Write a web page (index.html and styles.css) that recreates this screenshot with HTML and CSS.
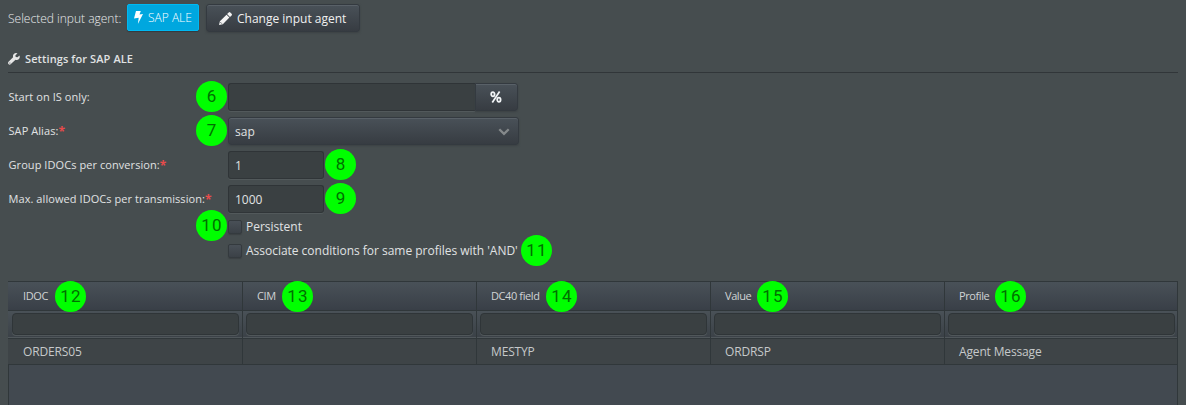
FILE: index.html
```html
<!DOCTYPE html>
<html lang="en">
<head>
<meta charset="utf-8">
<title>Settings for SAP ALE</title>
<link rel="stylesheet" href="styles.css">
</head>
<body>
<header class="toolbar">
  <span class="caption">Selected input agent:</span>
  <span class="agent"><svg width="9" height="13" viewBox="0 0 9 13"><path d="M2 0h4.800L5.500 3.500 9 3 3.900 13 4.700 6.800 0 7.400z" fill="#fff"/></svg><span>SAP ALE</span></span>
  <button class="button change"><svg width="13" height="13" viewBox="0 0 13 13"><path d="M0 13 .9 9.300 7.500 2.700l2.900 2.900-6.600 6.600zM8.100 2.100 9.700.5q.8-.8 1.600 0l1.300 1.300q.8.8 0 1.600L11 5z" fill="#f3f3f3"/><path d="m1.300 10.100 1.600 1.600" stroke="#434a4e" stroke-width=".8"/></svg><span>Change input agent</span></button>
</header>
<h2 class="heading"><svg width="12" height="12" viewBox="0 0 12 12"><path d="M11.500 2.600 9.500 4.300 7.700 3.900 7.400 2.200 9.500.4Q7.500-.4 5.800 1 4.600 2.200 5.100 4.200L.5 8.800Q-.4 10 .6 11.200q1.200.9 2.300-.1L7.500 6.700q2.100.6 3.500-.7 1.200-1.500.5-3.400z" fill="#e6e6e6"/><circle cx="1.900" cy="10" r=".6" fill="#464d4f"/></svg><span>Settings for SAP ALE</span></h2>
<main class="form">
  <div class="row"><label class="label">Start on IS only:</label><i class="marker left">6</i><div class="field wide joined"></div><button class="button percent"><svg width="12" height="12" viewBox="0 0 12 12" fill="none" stroke="#f2f5f7"><ellipse cx="2.900" cy="3.300" rx="1.700" ry="2.100" stroke-width="1.800"/><ellipse cx="8.900" cy="8.700" rx="1.700" ry="2.100" stroke-width="1.800"/><path d="M9.600 .5 2.300 11.500" stroke-width="1.700"/></svg></button></div>
  <div class="row"><label class="label">SAP Alias:<b>*</b></label><i class="marker left">7</i><div class="select"><span>sap</span><svg width="12" height="8" viewBox="0 0 12 8"><path d="m1.300 1.200 4.700 4.700 4.700-4.700" fill="none" stroke="#85898b" stroke-width="2.300"/></svg></div></div>
  <div class="row"><label class="label">Group IDOCs per conversion:<b>*</b></label><div class="field">1</div><i class="marker right">8</i></div>
  <div class="row"><label class="label">Max. allowed IDOCs per transmission:<b>*</b></label><div class="field">1000</div><i class="marker right">9</i></div>
  <div class="check first"><i class="marker left two">10</i><span class="box"></span><span>Persistent</span></div>
  <div class="check"><span class="box"></span><span class="long">Associate conditions for same profiles with 'AND'</span><i class="marker two m11">11</i></div>
</main>
<section class="grid">
  <div class="cells head">
    <div><span>IDOC</span><i class="marker two m12">12</i></div>
    <div><span>CIM</span><i class="marker two m13">13</i></div>
    <div><span>DC40 field</span><i class="marker two m14">14</i></div>
    <div><span>Value</span><i class="marker two m15">15</i></div>
    <div><span>Profile</span><i class="marker two m16">16</i></div>
  </div>
  <div class="cells filter">
    <div><span class="filter-box"></span></div><div><span class="filter-box"></span></div><div><span class="filter-box"></span></div><div><span class="filter-box"></span></div><div><span class="filter-box"></span></div>
  </div>
  <div class="cells data">
    <div>ORDERS05</div><div></div><div>MESTYP</div><div>ORDRSP</div><div>Agent Message</div>
  </div>
</section>
</body>
</html>
```
FILE: styles.css
```css
* { box-sizing: border-box; }
body {
  margin: 0;
  height: 405px;
  overflow: hidden;
  background: #464d4f;
  color: #e0e2e3;
  font: 12px/16px "Open Sans", sans-serif;
  display: flex;
  flex-direction: column;
}
svg { display: block; flex: none; }
span { white-space: nowrap; }
.toolbar { display: flex; height: 36px; padding: 4px 8px 0; flex: none; }
.caption { width: 119px; padding-top: 7px; font-weight: 300; color: #e8eaeb; }
.agent {
  display: flex;
  align-items: center;
  width: 72px;
  height: 27px;
  padding-left: 6px;
  gap: 5px;
  color: #fff;
  font-weight: 300;
  background: #00a7df;
  border: 1px solid #00b9f2;
  border-radius: 2px;
  box-shadow: 0 1px 1px #343a3d;
}
.button, .select {
  border: 1px solid #343a40;
  background: linear-gradient(#495158, #373c42);
  box-shadow: inset 0 1px #596168, 0 1px 2px #3c4245;
  border-radius: 3px;
  color: #f0f0f0;
  font: inherit;
}
.change {
  width: 154px;
  height: 28px;
  margin-left: 7px;
  padding: 1px 0 0 12px;
  display: flex;
  align-items: center;
  gap: 5px;
}
.heading {
  display: flex;
  align-items: center;
  gap: 5px;
  height: 27px;
  flex: none;
  margin: 10px 8px 0;
  border-bottom: 1px solid #313639;
  font-size: 11px;
  font-weight: 600;
  letter-spacing: .1px;
}
.form { padding: 10px 8px 0; height: 208px; flex: none; }
.row { position: relative; display: flex; height: 34px; }
.label { width: 220px; padding: 6px 0 0 .5px; font-size: 11px; letter-spacing: .07px; white-space: nowrap; }
.label b { color: #e84b4b; font-size: 12px; font-weight: 700; line-height: 14px; vertical-align: -1px; }
.field {
  width: 96px;
  height: 28px;
  padding: 6px 6px 0;
  background: #3a4042;
  border: 1px solid #2f3437;
  border-bottom-color: #303538;
  border-radius: 3px;
  box-shadow: 0 1px #52595b;
}
.wide { width: 247px; }
.joined { border-radius: 3px 0 0 3px; border-right: 0; }
.percent {
  width: 43px;
  height: 28px;
  display: grid;
  place-items: center;
  padding: 0 2px 1px 0;
  border-radius: 0 3px 3px 0;
}
.select {
  width: 291px;
  height: 28px;
  display: flex;
  align-items: center;
  justify-content: space-between;
  padding: 1px 8px 0 6px;
  color: #e0e2e3;
}
.marker {
  position: absolute;
  z-index: 1;
  width: 31px;
  height: 31px;
  border-radius: 50%;
  background: #00ff00;
  color: #007000;
  font: 400 17px/31px Roboto, sans-serif;
  text-align: center;
}
.two { letter-spacing: 1.2px; padding-left: 1px; }
.left { left: 188px; top: -2px; }
.right { left: 317px; top: -2px; }
.check {
  position: relative;
  display: flex;
  align-items: center;
  gap: 4px;
  height: 24px;
  margin-left: 220px;
}
.first { margin-top: -4px; }
.first .marker { left: -32px; top: -5px; }
.check .m11 { left: 293px; top: -4px; }
.long { letter-spacing: -.02px; }
.box {
  width: 14px;
  height: 14px;
  background: linear-gradient(#495057, #3b4147);
  border: 1px solid #343a3e;
  border-radius: 2px;
  box-shadow: 0 1px 1px #3b4143;
}
.grid {
  flex: 1;
  margin: 0 8px;
  border: 1px solid #30373a;
  border-bottom: 0;
  background: #424950;
}
.cells { display: grid; grid-template-columns: 235px repeat(3, 234px) 232px; margin-left: -1px; width: 1169px; }
.cells > div { position: relative; border-right: 1px solid #30373a; }
.cells > div:last-child { border-right: 0; }
.head { height: 29px; border-bottom: 1px solid #30373a; background: linear-gradient(#495158, #393f47); }
.head > div { padding: 6px 0 0 14px; font-size: 11px; line-height: 16px; letter-spacing: -.4px; color: #d0d3d4; }
.head > div:first-child, .data > div:first-child { padding-left: 15px; }
.head .marker { top: -1px; letter-spacing: 1.2px; }
.m12 { left: 47px; }
.m13 { left: 39px; }
.m14 { left: 69px; }
.m15 { left: 46px; }
.m16 { left: 50px; }
.filter { height: 28px; border-bottom: 1px solid #30373a; background: linear-gradient(#495157, #3b4147); box-shadow: inset 0 -1px #50575b; }
.filter > div { padding: 2px 3px 0; }
.filter > div:first-child { padding-left: 4px; }
.filter > div:last-child { padding-right: 2px; }
.filter-box { display: block; height: 22px; border: 1px solid #2f3538; border-radius: 4px; background: #3a4042; box-shadow: 0 1px #50575a; }
.data { height: 26px; border-bottom: 1px solid #30373a; background: #3e4447; }
.data > div { padding: 5px 0 0 14px; letter-spacing: -.15px; color: #c6c9ca; }
```
